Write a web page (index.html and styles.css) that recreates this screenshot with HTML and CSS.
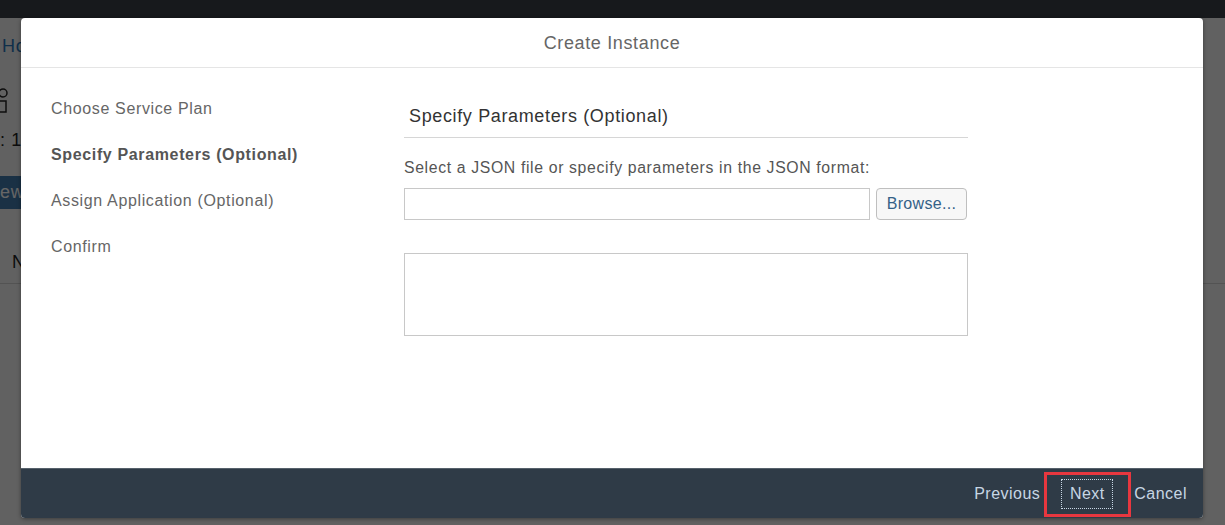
FILE: index.html
```html
<!DOCTYPE html>
<html>
<head>
<meta charset="utf-8">
<link rel="stylesheet" href="styles.css">
</head>
<body>
<div class="page">
  <div class="shell"></div>
  <div class="bg-content">
    <div class="bg-link">Home</div>
    <div class="bg-icon">
      <svg width="12" height="26" viewBox="0 0 12 26"><circle cx="3" cy="5" r="4" fill="none" stroke="#222" stroke-width="1.5"/><rect x="-4" y="13" width="10" height="11" fill="none" stroke="#222" stroke-width="1.5"/></svg>
    </div>
    <div class="bg-count">: 1</div>
    <div class="bg-btn">ew</div>
    <div class="bg-tab">N</div>
  </div>
  <div class="overlay"></div>
</div>

<div class="dialog">
  <header class="dlg-header">Create Instance</header>
  <div class="dlg-body">
    <nav class="steps">
      <div class="step">Choose Service Plan</div>
      <div class="step active">Specify Parameters (Optional)</div>
      <div class="step">Assign Application (Optional)</div>
      <div class="step">Confirm</div>
    </nav>
    <section class="panel">
      <h2 class="panel-title">Specify Parameters (Optional)</h2>
      <label class="panel-label">Select a JSON file or specify parameters in the JSON format:</label>
      <div class="file-row">
        <div class="file-input"></div>
        <button class="browse">Browse...</button>
      </div>
      <div class="json-area"></div>
    </section>
  </div>
  <footer class="dlg-footer">
    <button class="fbtn">Previous</button>
    <button class="fbtn next">Next</button>
    <button class="fbtn">Cancel</button>
  </footer>
</div>
</body>
</html>
```

FILE: styles.css
```css
* { box-sizing: border-box; }
html, body { margin: 0; padding: 0; }
body {
  width: 1225px;
  height: 525px;
  overflow: hidden;
  font-family: "Liberation Sans", Arial, sans-serif;
  letter-spacing: 0.04em;
  background: #f2f2f2;
  position: relative;
}
.page { position: relative; height: 525px; }
.shell { height: 18px; background: #3a4047; }
.bg-content { display: flex; flex-direction: column; }
.bg-link { color: #2a77b8; font-size: 18px; margin: 16px 0 0 2px; line-height: 24px; }
.bg-icon { margin-top: 30px; height: 26px; }
.bg-count { font-size: 18px; color: #222; margin-top: 14px; line-height: 24px; }
.bg-btn {
  margin-top: 24px; height: 33px; width: 40px;
  background: #427cac; color: #fff; font-size: 18px; line-height: 33px;
}
.bg-tab {
  font-size: 18px; color: #222; margin-top: 41px; padding-left: 12px; line-height: 24px;
  height: 34px; border-bottom: 1px solid #cfcfcf;
}
.overlay { position: absolute; inset: 0; background: rgba(0,0,0,0.6); }

.dialog {
  position: absolute;
  left: 21px; top: 18px;
  width: 1182px; height: 500px;
  background: #fff;
  border-radius: 4px;
  display: flex; flex-direction: column;
  overflow: hidden;
  box-shadow: 0 1px 4px rgba(0,0,0,0.4);
}
.dlg-header {
  height: 50px; flex: none;
  border-bottom: 1px solid #e5e5e5;
  display: flex; align-items: center; justify-content: center;
  font-size: 18px; color: #666;
  padding-top: 2px;
}
.dlg-body { flex: 1; display: flex; }
.steps {
  width: 383px; flex: none;
  padding: 29px 0 0 30px;
  display: flex; flex-direction: column; gap: 22px;
}
.step { font-size: 16px; color: #666; line-height: 24px; }
.step.active { font-weight: bold; color: #555; }
.panel { width: 564px; display: flex; flex-direction: column; padding-top: 35px; }
.panel-title {
  margin: 0; font-weight: normal; font-size: 18px; color: #333;
  padding: 0 0 8px 5px; line-height: 26px;
  border-bottom: 1px solid #d6d6d6;
}
.panel-label { font-size: 15.8px; color: #555; margin-top: 19px; line-height: 22px; }
.file-row { display: flex; gap: 6px; margin-top: 9px; height: 32px; }
.file-input { flex: 1; border: 1px solid #c8c8c8; background: #fff; }
.browse {
  width: 91px; border: 1px solid #bfbfbf; border-radius: 4px; background: #f7f7f7;
  color: #346187; font-family: inherit; font-size: 16px; letter-spacing: 0.02em;
  padding: 0; margin-right: 1px;
}
.json-area { margin-top: 33px; height: 83px; border: 1px solid #c8c8c8; background: #fff; }

.dlg-footer {
  height: 50px; flex: none;
  background: #2f3b47;
  border-top: 1px solid #56616b;
  display: flex; align-items: center; justify-content: flex-end;
  padding-right: 9px;
}
.fbtn {
  background: none; border: none; font-family: inherit; font-size: 16px;
  color: #c7d6e4; padding: 0 7px; height: 30px; letter-spacing: 0.03em;
}
.fbtn.next {
  position: relative;
  outline: 1px dotted #c7d6e4; outline-offset: -1px;
  width: 52px; margin: 0 14px; padding: 0;
}
.fbtn.next::after {
  content: ""; position: absolute;
  left: -17px; right: -18px; top: -7px; bottom: -8px;
  border: 3px solid #e8373f;
}
```
